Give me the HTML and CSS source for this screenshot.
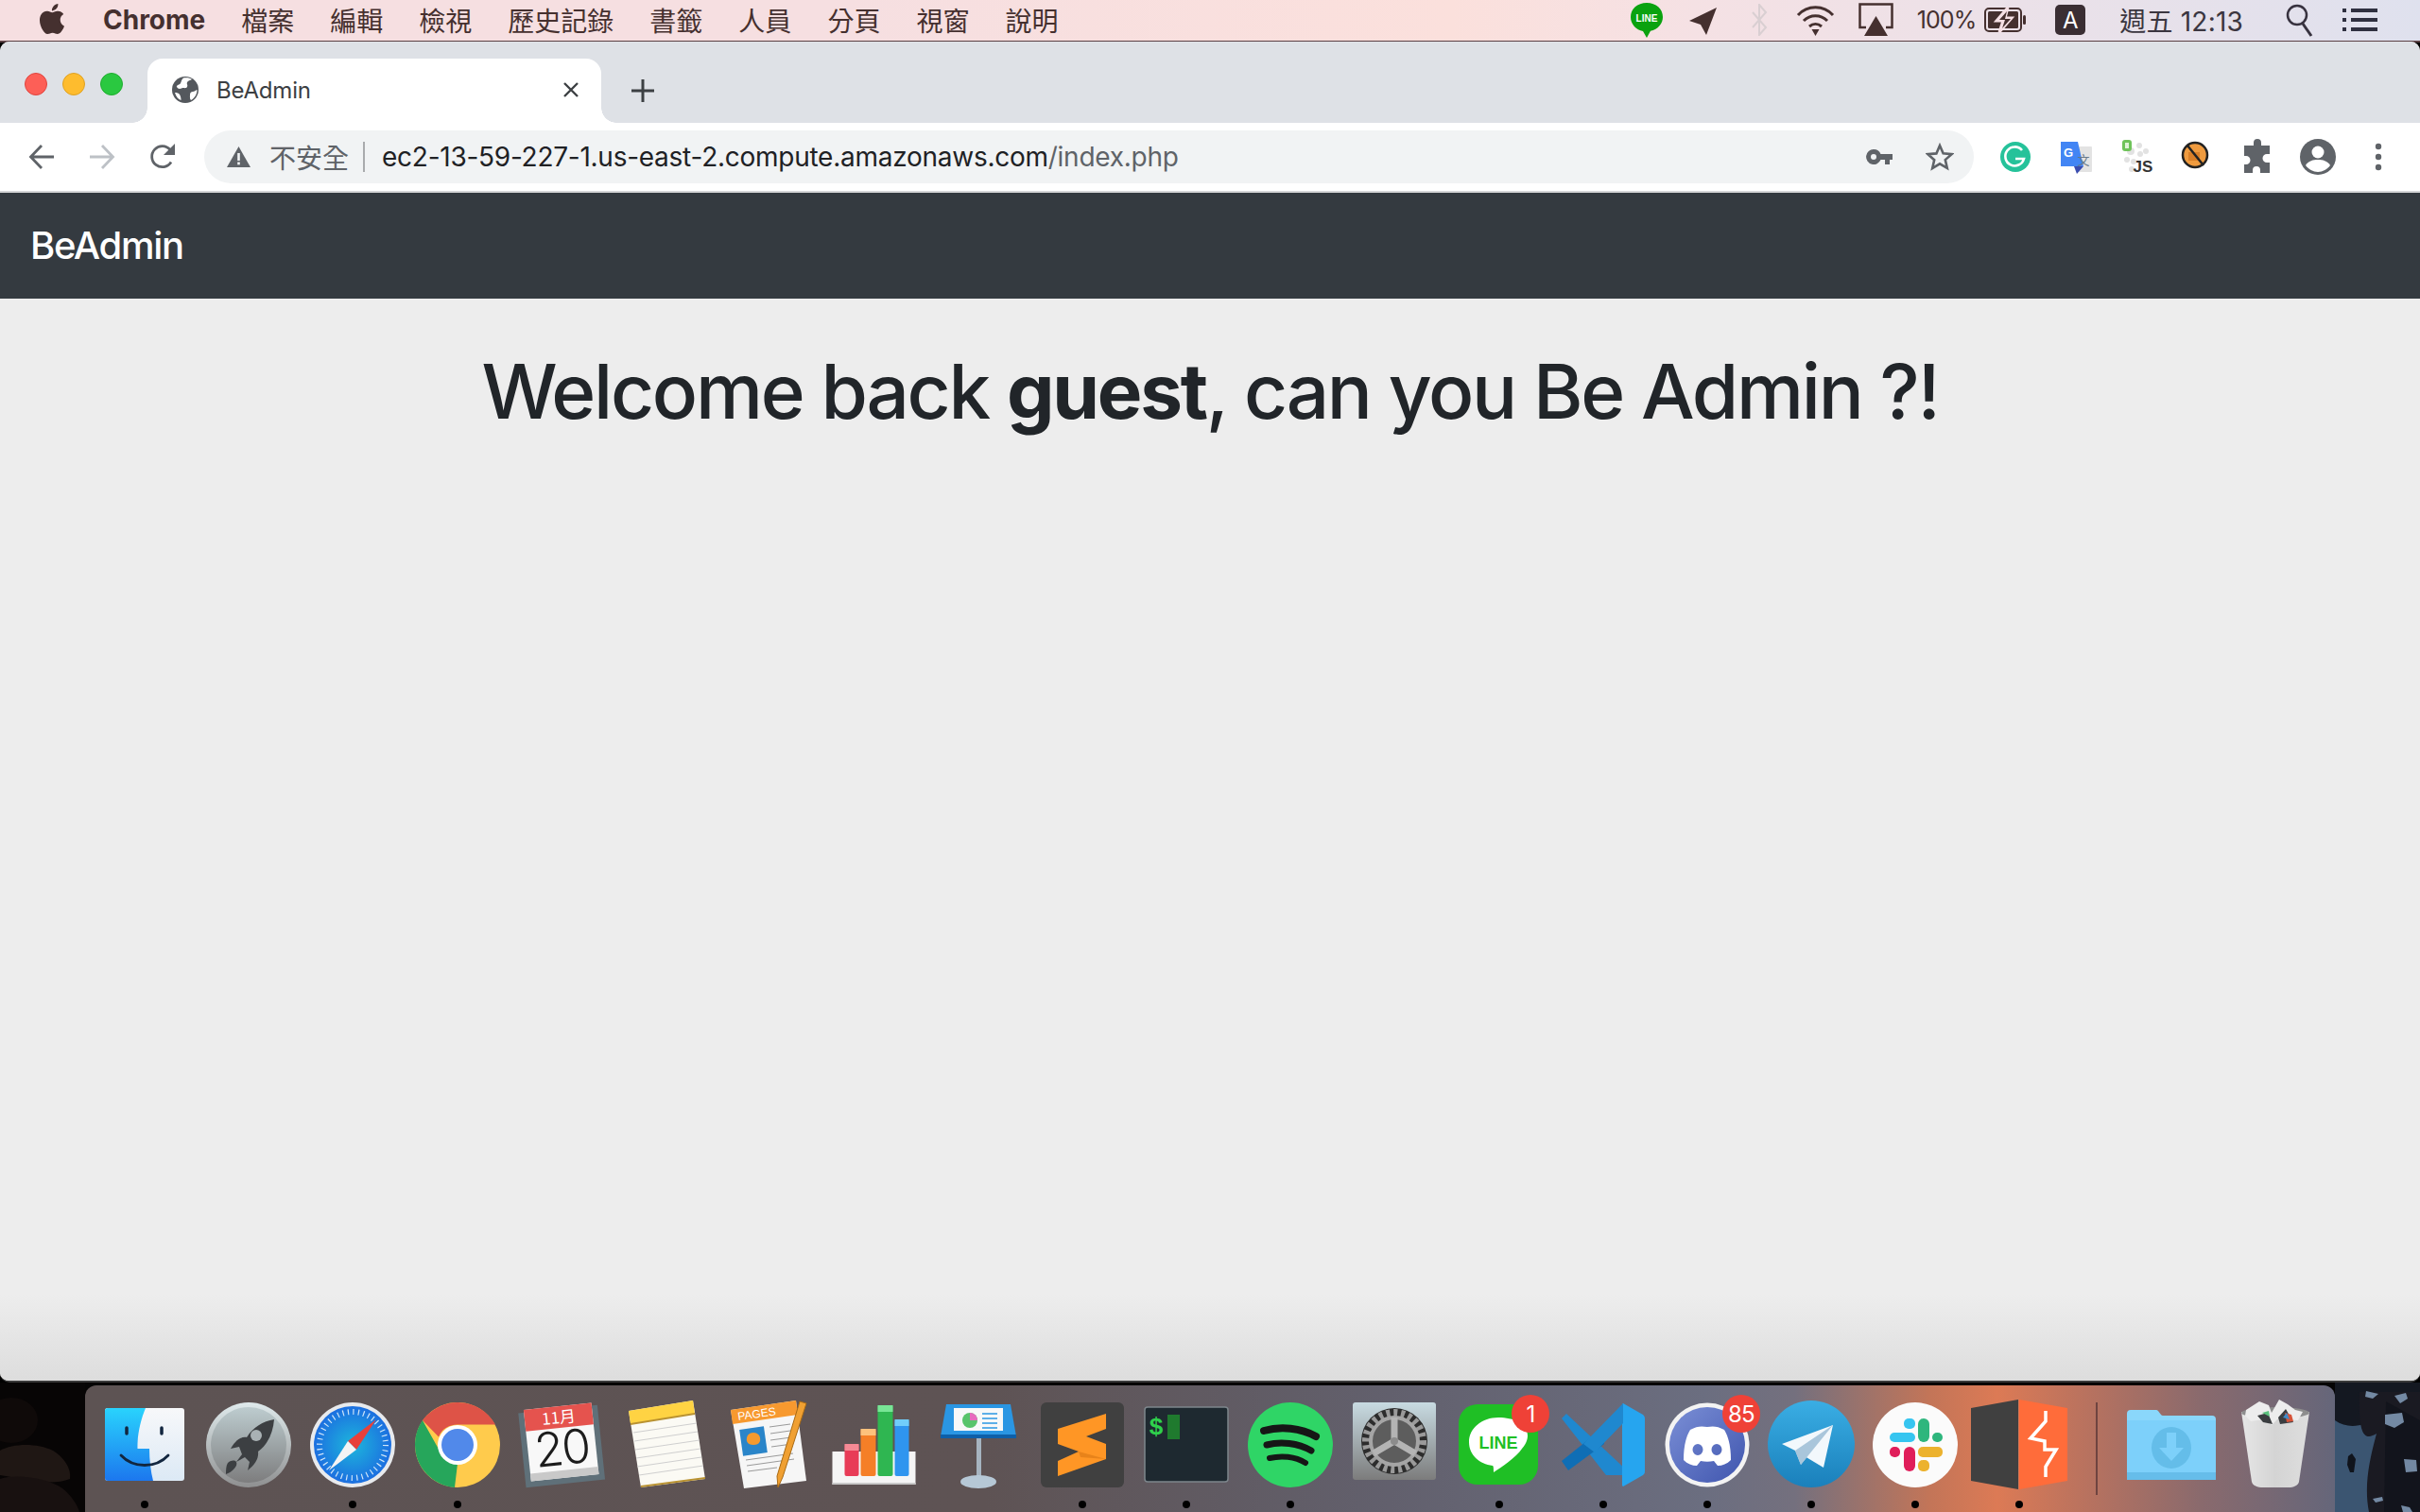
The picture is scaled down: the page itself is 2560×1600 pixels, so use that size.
FILE: index.html
```html
<!DOCTYPE html>
<html lang="zh-Hant">
<head>
<meta charset="utf-8">
<title>BeAdmin</title>
<link rel="stylesheet" href="styles.css">
</head>
<body>
<div class="screen">
  <header class="menubar">
    <svg class="apple" viewBox="0 0 24 24"><path fill="#45302f" d="M12.152 6.896c-.948 0-2.415-1.078-3.96-1.04-2.04.027-3.91 1.183-4.961 3.014-2.117 3.675-.546 9.103 1.519 12.09 1.013 1.454 2.208 3.09 3.792 3.039 1.52-.065 2.09-.987 3.935-.987 1.831 0 2.35.987 3.96.948 1.637-.026 2.676-1.48 3.676-2.948 1.156-1.688 1.636-3.325 1.662-3.415-.039-.013-3.182-1.221-3.22-4.857-.026-3.04 2.48-4.494 2.597-4.559-1.429-2.09-3.623-2.324-4.39-2.376-2-.156-3.675 1.09-4.61 1.09zM15.53 3.83c.843-1.012 1.4-2.427 1.245-3.83-1.207.052-2.662.805-3.532 1.818-.78.896-1.454 2.338-1.273 3.714 1.338.104 2.715-.688 3.559-1.701"/></svg>
    <nav class="menus">
      <span class="menu-app">Chrome</span>
      <span>檔案</span><span>編輯</span><span>檢視</span><span>歷史記錄</span><span>書籤</span><span>人員</span><span>分頁</span><span>視窗</span><span>說明</span>
    </nav>
    <div class="status">
      <svg class="st-line" viewBox="0 0 36 40"><path fill="#0aa20f" d="M18 2C8 2 1 8.500 1 17c0 8 6 13.500 13 15l4 7 4-7.200C30 30 35 24 35 17 35 8.500 28 2 18 2z"/><text x="18" y="22" class="st-line-text">LINE</text></svg>
      <svg class="st-send" viewBox="0 0 31 36"><path fill="#45302f" d="M30 5 1 19l12 4 6 11z"/></svg>
      <svg class="st-bt" viewBox="0 0 18 34"><path fill="none" stroke="#d9cfd2" stroke-width="2" d="M2 9l14 16-7 8V1l7 8L2 25"/></svg>
      <svg class="st-wifi" viewBox="0 0 41 34"><g fill="none" stroke="#45302f" stroke-width="3"><path d="M2 12C12 1 29 1 39 12"/><path d="M8 18c7-7 18-7 25 0"/><path d="M14 24c4-3.500 9-3.500 13 0"/></g><path fill="#45302f" d="M16.500 27h8L20.500 34z"/></svg>
      <svg class="st-air" viewBox="0 0 37 36"><path fill="none" stroke="#45302f" stroke-width="2.500" d="M8 26H1.500V1.500h34V26H29"/><path fill="#45302f" d="M18.500 14 31 35H6z"/></svg>
      <span class="st-pct">100%</span>
      <svg class="st-bat" viewBox="0 0 45 28"><rect x="1" y="2" width="38" height="24" rx="4" fill="none" stroke="#45302f" stroke-width="2"/><rect x="4" y="5" width="32" height="18" rx="1.500" fill="#45302f"/><path fill="#f6e0e5" stroke="#f6e0e5" stroke-width="3" d="M25 1 13 15h7l-4 12 13-15h-7z"/><path fill="#45302f" d="M24 5l-8 9h6l-3 9 9-10h-6z"/><rect x="41" y="9" width="3" height="10" rx="1.500" fill="#45302f"/></svg>
      <span class="st-input">A</span>
      <span class="st-time">週五 12:13</span>
      <svg class="st-search" viewBox="0 0 29 36"><circle cx="12" cy="13" r="10" fill="none" stroke="#37323f" stroke-width="2.500"/><path stroke="#37323f" stroke-width="3" d="M18 22l9 13"/></svg>
      <svg class="st-list" viewBox="0 0 37 24"><g fill="#2f3040"><rect y="0" width="4" height="4"/><rect y="10" width="4" height="4"/><rect y="20" width="4" height="4"/><rect x="9" y="0" width="28" height="4"/><rect x="9" y="10" width="28" height="4"/><rect x="9" y="20" width="28" height="4"/></g></svg>
    </div>
  </header>

  <main class="window">
    <div class="tabstrip">
      <div class="lights"><i class="light red"></i><i class="light yellow"></i><i class="light green"></i></div>
      <div class="tab">
        <svg class="favicon" viewBox="0 0 28 28"><circle cx="14" cy="14" r="14" fill="#54585d"/><path fill="#fff" d="M12 1.500c4-.5 7 0 9 1.500-2 1-4 1.500-5 3s1 3 0 5-4 .5-6 1.500-4 .5-5-1.500 3-2 4-4 1-4 3-5.500zM26.500 14c0 5-3 9-6.500 11-1.500-1.500-1-4-1-6s1.500-3 3-3 3-1.500 4.500-2zM3 17c2 0 4 .5 5 2s1.500 3.500 1.500 6C6.500 24 4 21 3 17z"/></svg>
        <span class="tab-title">BeAdmin</span>
        <svg class="tab-close" viewBox="0 0 16 16"><path stroke="#3c4043" stroke-width="2.400" d="M1 1l14 14M15 1 1 15"/></svg>
      </div>
      <svg class="newtab" viewBox="0 0 24 24"><path stroke="#3c4043" stroke-width="3" d="M12 0v24M0 12h24"/></svg>
    </div>

    <div class="toolbar">
      <svg class="navbtn" viewBox="0 0 28 28"><path fill="none" stroke="#5f6368" stroke-width="2.800" d="M27 14H3M14 2 2.500 14 14 26"/></svg>
      <svg class="navbtn" viewBox="0 0 28 28"><path fill="none" stroke="#bdc1c6" stroke-width="2.800" d="M1 14h24M14 2l11.500 12L14 26"/></svg>
      <svg class="navbtn" viewBox="0 0 28 28"><path fill="none" stroke="#5f6368" stroke-width="2.800" d="M23 19.500A11 11 0 1 1 22 6.500"/><path fill="#5f6368" d="M27 0v12H15z"/></svg>
      <div class="omnibox">
        <svg class="warn" viewBox="0 0 25 22"><path fill="#5f6368" d="M12.500 0 25 22H0z"/><rect x="11.200" y="7" width="2.600" height="8" fill="#f1f3f4"/><rect x="11.200" y="16.500" width="2.600" height="2.800" fill="#f1f3f4"/></svg>
        <span class="insecure">不安全</span>
        <i class="omni-sep"></i>
        <span class="url">ec2-13-59-227-1.us-east-2.compute.amazonaws.com<span class="url-path">/index.php</span></span>
        <svg class="key" viewBox="0 0 28 18"><path fill="#5f6368" fill-rule="evenodd" d="M8 1a8 8 0 0 1 7.500 5H28v6h-3v5h-5v-5h-4.500A8 8 0 1 1 8 1zm0 5a3 3 0 1 0 0 6 3 3 0 0 0 0-6z"/></svg>
        <svg class="star" viewBox="0 0 30 30"><path fill="none" stroke="#5f6368" stroke-width="2.600" d="M15 3l3.600 8.300 9 .8-6.800 6 2 8.800L15 22.300 7.200 27l2-8.800-6.800-6 9-.8z"/></svg>
      </div>
      <div class="exts">
        <svg class="ext" viewBox="0 0 40 40"><circle cx="20" cy="20" r="16" fill="#25c29a"/><path fill="none" stroke="#fff" stroke-width="2.600" d="M27 13a10 10 0 1 0 2 9h-9"/></svg>
        <svg class="ext" viewBox="0 0 40 40"><rect x="20" y="9" width="17" height="27" rx="1" fill="#e3e3e3"/><path fill="#4285f4" d="M4 4h18l6 26H4z"/><path fill="#3a4cb0" d="M18 30h10l-7 8z"/><text x="12" y="20" class="ext-g">G</text><text x="28" y="28" class="ext-wen">文</text></svg>
        <svg class="ext" viewBox="0 0 40 40"><g fill="#e2e2e2"><circle cx="14" cy="14" r="4"/><circle cx="23" cy="8" r="3"/><circle cx="30" cy="14" r="3"/><circle cx="24" cy="17" r="3"/><circle cx="10" cy="23" r="3"/><circle cx="17" cy="25" r="3"/><circle cx="15" cy="33" r="3"/></g><rect x="5" y="2" width="10" height="12" rx="3" fill="#6fc35a"/><rect x="8" y="5" width="4" height="6" fill="#dff2d8"/><text x="27" y="36" class="ext-js">JS</text></svg>
        <svg class="ext" viewBox="0 0 40 40"><circle cx="18" cy="18" r="13" fill="#ef9b3f" stroke="#222" stroke-width="2.500"/><rect x="11" y="15" width="12" height="9" fill="#d97f28"/><path stroke="#222" stroke-width="2.500" d="M10 8l17 21"/></svg>
        <svg class="ext" viewBox="0 0 40 40"><path fill="#5f6368" d="M16 4a4 4 0 0 1 8 0v3h9v9h-3a4 4 0 0 0 0 9h3v11H23v-3a4 4 0 0 0-8 0v3H6V27h2a4 4 0 0 0 0-9H6V7h10z" transform="translate(0 1)"/></svg>
        <svg class="ext" viewBox="0 0 40 40"><circle cx="20" cy="20" r="19" fill="#5f6368"/><circle cx="20" cy="15" r="6.500" fill="#fff"/><path fill="#fff" d="M7 29c3-5 8-6 13-6s10 1 13 6c-3 4-8 7-13 7S10 33 7 29z"/></svg>
        <svg class="ext" viewBox="0 0 40 40"><g fill="#5f6368"><circle cx="20" cy="9" r="3.200"/><circle cx="20" cy="20" r="3.200"/><circle cx="20" cy="31" r="3.200"/></g></svg>
      </div>
    </div>

    <div class="navbar"><span class="brand">BeAdmin</span></div>
    <div class="content">
      <h1 class="welcome">Welcome back <strong>guest</strong>, can you Be Admin ?!</h1>
    </div>
  </main>

  <footer class="desktop">
    <svg class="wall" viewBox="0 0 90 137" preserveAspectRatio="none"><rect width="90" height="137" fill="#070505"/><ellipse cx="12" cy="40" rx="28" ry="24" fill="#0f0a09"/><path fill="#1f1714" d="M0 72c14-8 40-8 56 0 10 6 20 18 18 30-20 8-50 0-74-4z"/><path fill="#181110" d="M0 102c20-6 52 0 66 10 10 8 16 18 18 25H0z"/></svg>
    <div class="dock">
      <div class="slot">
        <svg class="app" viewBox="0 0 90 90"><defs><linearGradient id="fb" x1="0" y1="0" x2="0" y2="1"><stop offset="0" stop-color="#29d3fd"/><stop offset="1" stop-color="#1c77ee"/></linearGradient><linearGradient id="fw" x1="0" y1="0" x2="0" y2="1"><stop offset="0" stop-color="#f7f8fa"/><stop offset="1" stop-color="#dce9f5"/></linearGradient></defs><rect x="3" y="6" width="84" height="77" rx="3" fill="url(#fw)"/><path fill="url(#fb)" d="M6 6h40c-5 12-9 28-8.500 43H50c0 12 1.500 24 4 34H6a3 3 0 0 1-3-3V9a3 3 0 0 1 3-3z"/><path stroke="#12263f" stroke-width="3.500" stroke-linecap="round" d="M26 27v6M63 27v6"/><path fill="none" stroke="#12263f" stroke-width="2.800" stroke-linecap="round" d="M20 56c13 14 37 14 50 0"/></svg>
        <i class="dot"></i>
      </div>
      <div class="slot">
        <svg class="app" viewBox="0 0 90 90"><defs><linearGradient id="lp" x1="0" y1="0" x2="0" y2="1"><stop offset="0" stop-color="#dfeaec"/><stop offset="1" stop-color="#8f9091"/></linearGradient><linearGradient id="lpi" x1="0" y1="0" x2="0" y2="1"><stop offset="0" stop-color="#bdcccf"/><stop offset="1" stop-color="#7d7d7e"/></linearGradient></defs><circle cx="45" cy="45" r="45" fill="url(#lp)"/><circle cx="45" cy="45" r="40" fill="url(#lpi)"/><path fill="#3c3f42" d="M72 18c-12 2-22 8-29 19-6-1-12 3-17 12l9-2 3 8-6 8 9-5 5 5-2 9c8-6 12-13 11-20 10-7 16-20 17-34z"/><path fill="#3c3f42" d="M23 64c4-3 7-3 9-1 1 2 0 5-3 8-2 2-5 4-8 5 0-4 0-9 2-12z"/><circle cx="53" cy="35" r="6" fill="#a9b1b4"/></svg>
        <i class="dot off"></i>
      </div>
      <div class="slot">
        <svg class="app" viewBox="0 0 90 90"><defs><radialGradient id="sf" cx=".5" cy=".5" r=".5"><stop offset="0" stop-color="#1db6dc"/><stop offset="1" stop-color="#1c6fe0"/></radialGradient></defs><circle cx="45" cy="45" r="45" fill="#e8eaed"/><circle cx="45" cy="45" r="41" fill="url(#sf)"/><circle cx="45" cy="45" r="35" fill="none" stroke="#cfe6fa" stroke-width="6" stroke-dasharray="1.200 4.300"/><path fill="#e8403a" d="M70 18 40 41l9 9z"/><path fill="#f4f4f4" d="M20 72l20-31 9 9z"/></svg>
        <i class="dot"></i>
      </div>
      <div class="slot">
        <svg class="app" viewBox="0 0 90 90"><circle cx="45" cy="45" r="45" fill="#ffcb4c"/><path fill="#de5347" d="M45 0c17 0 32 9 40 23.500H45c-9 0-17 5-20 13L8 19C16 8 30 0 45 0z"/><path fill="#26a65b" d="M8 19l19 34c3 7 10 12 18 12l-3 25C19 88 0 69 0 45c0-10 3-19 8-26z"/><circle cx="45" cy="45" r="21" fill="#fff"/><circle cx="45" cy="45" r="17" fill="#5189ea"/></svg>
        <i class="dot"></i>
      </div>
      <div class="slot">
        <svg class="app" viewBox="0 0 90 90"><g transform="rotate(-6 45 45)"><rect x="3" y="7" width="84" height="79" fill="#5f7079"/><rect x="9" y="4" width="72" height="76" fill="#f8f8f8"/><rect x="9" y="4" width="72" height="23" fill="#e5534e"/><rect x="9" y="72" width="72" height="8" fill="#c9c9c9"/><text x="45" y="22" class="cal-month">11月</text><text x="45" y="66" class="cal-day">20</text></g></svg>
        <i class="dot off"></i>
      </div>
      <div class="slot">
        <svg class="app" viewBox="1 0 90 90"><path fill="#fbfaf4" d="M7 9 75-2l13 83-68 9z"/><path fill="#ffd343" d="M7 9 75-2l2 14L9 23z"/><path fill="#b99231" d="M9 22l68-11v2L9 24z"/><g stroke="#cfcfcf" stroke-width="1"><path d="M12 32 79 22M13 41 80 31M14 50 82 40M15 59 83 49M16 68 84 58M18 77 86 67"/></g><path fill="#b99231" d="M20 88l68-9v2l-68 9z"/></svg>
        <i class="dot off"></i>
      </div>
      <div class="slot">
        <svg class="app" viewBox="1 0 90 90"><path fill="#f6f6f6" d="M5 8 74-2l11 85-66 8z"/><path fill="#f7992f" d="M5 8 74-2l2 15L7 23z"/><text x="13" y="19" class="pages-label" transform="rotate(-8 13 19)">PAGES</text><rect x="16" y="27" width="26" height="28" fill="#2a85c9" transform="rotate(-8 29 41)"/><path fill="#f59a2e" d="M29 32c5 0 8 4 7 9-1 3-4 4-7 4s-6-1-7-4c-1-5 2-9 7-9z"/><g stroke="#9a9a9a" stroke-width="1"><path d="M46 26 68 23M47 33 68 30M47 40 69 37M48 47 70 44M21 61 71 54M22 67 72 60M23 73 54 69"/></g><path fill="#f0a032" stroke="#a86a14" stroke-width="1" d="M78-1l7 2L60 79l-5 11-1-12z"/></svg>
        <i class="dot off"></i>
      </div>
      <div class="slot">
        <svg class="app" viewBox="1.500 0 90 90"><path fill="#f5f5f5" d="M3 52h88v35H3z"/><rect x="3" y="85" width="88" height="2" fill="#c9c9c9"/><rect x="16" y="44" width="15" height="34" rx="2" fill="#e83b57"/><rect x="33" y="28" width="16" height="50" rx="2" fill="#f57f27"/><rect x="51" y="3" width="16" height="75" rx="2" fill="#2fb651"/><rect x="69" y="18" width="15" height="60" rx="2" fill="#2f95ef"/><g><rect x="16" y="44" width="15" height="7" fill="#f58a95"/><rect x="33" y="28" width="16" height="7" fill="#fdc27c"/><rect x="51" y="3" width="16" height="7" fill="#78e596"/><rect x="69" y="18" width="15" height="7" fill="#71cdfa"/></g></svg>
        <i class="dot off"></i>
      </div>
      <div class="slot">
        <svg class="app" viewBox="2 0 90 90"><rect x="45" y="38" width="5" height="46" fill="#a6b4c0"/><ellipse cx="47" cy="84" rx="19" ry="7" fill="#b6c8d6"/><path fill="#2a96e3" d="M13 2h68l6 34H7z"/><rect x="7" y="34" width="80" height="4" fill="#0e5fa8"/><rect x="21" y="6" width="52" height="24" fill="#f8f8f8"/><circle cx="38" cy="19" r="8" fill="#58c46a"/><path fill="#e86abf" d="M38 19v-8a8 8 0 0 1 8 8z"/><g stroke="#5dafe8" stroke-width="2"><path d="M51 12h16M51 17h16M51 22h16M51 27h16"/></g></svg>
        <i class="dot off"></i>
      </div>
      <div class="slot">
        <svg class="app" viewBox="0 0 90 90"><rect x="1" y="0" width="88" height="90" rx="6" fill="#404040"/><path fill="#ff9625" d="M70 12 19 28v16l22 8-22 10v16l51-18V44l-21-8 21-8z"/><path fill="#e8831a" d="M41 52l29 8-27-2z"/></svg>
        <i class="dot"></i>
      </div>
      <div class="slot">
        <svg class="app" viewBox="0 0 90 90"><rect x="1" y="5" width="88" height="79" rx="3" fill="#1e2930" stroke="#7d868c" stroke-width="1.500"/><text x="13" y="34" class="term-dollar">$</text><rect x="25" y="13" width="13" height="26" fill="#1f7a2e"/></svg>
        <i class="dot"></i>
      </div>
      <div class="slot">
        <svg class="app" viewBox="0 0 90 90"><circle cx="45" cy="45" r="45" fill="#2fd566"/><g fill="none" stroke="#161616" stroke-linecap="round"><path stroke-width="8" d="M17 30c18-5 39-3 55 6"/><path stroke-width="7" d="M20 45c15-4 33-2 47 6"/><path stroke-width="6" d="M23 59c12-3 27-2 38 5"/></g></svg>
        <i class="dot"></i>
      </div>
      <div class="slot">
        <svg class="app" viewBox="0 0 90 90"><defs><linearGradient id="sp" x1="0" y1="0" x2="0" y2="1"><stop offset="0" stop-color="#c8dbe2"/><stop offset="1" stop-color="#7c7c7c"/></linearGradient></defs><rect x="1" y="0" width="88" height="82" rx="3" fill="url(#sp)"/><circle cx="45" cy="41" r="35" fill="#2c2c2c"/><circle cx="45" cy="41" r="30" fill="none" stroke="#9a9a9a" stroke-width="8" stroke-dasharray="4 3.800"/><circle cx="45" cy="41" r="25" fill="#5d5d5d" stroke="#a5a5a5" stroke-width="4"/><g stroke="#b4b4b4" stroke-width="7"><path d="M45 41V16M45 41 23 54M45 41 67 54"/></g><circle cx="45" cy="41" r="4" fill="#8c8c8c"/></svg>
        <i class="dot off"></i>
      </div>
      <div class="slot">
        <svg class="app" viewBox="0 0 90 90"><rect x="2" y="2" width="84" height="85" rx="20" fill="#1fbf25"/><path fill="#fff" d="M44 16c-17 0-31 11-31 26 0 14 11 23 25 25 1 0 1 4 1 7 8-5 24-16 30-25 4-5 6-9 6-14C75 22 60 16 44 16z"/><text x="44" y="49" class="line-text">LINE</text></svg>
        <i class="dot"></i><b class="badge badge-line">1</b>
      </div>
      <div class="slot">
        <svg class="app" viewBox="0 0 90 90"><path fill="#1f88cf" d="M1 17 6 12 70 72l-5 5-17 0z"/><path fill="#0f6eb5" d="M1 62 46 26l0 18L8 72z"/><path fill="#26a5ef" d="M66 1l21 12c1 1 2 2 2 4v56c0 2-1 3-2 4L66 89l-1-1V2z"/><path fill="#1f88cf" d="M66 1 24 44l12 9 30-31z"/></svg>
        <i class="dot"></i>
      </div>
      <div class="slot">
        <svg class="app" viewBox="3 0 90 90"><defs><linearGradient id="dc" x1="0" y1="0" x2="1" y2="1"><stop offset="0" stop-color="#7b8fd6"/><stop offset="1" stop-color="#3f55ae"/></linearGradient></defs><circle cx="48" cy="45" r="44.500" fill="#f3f3f3"/><circle cx="48" cy="45" r="40" fill="url(#dc)"/><path fill="#fff" fill-rule="evenodd" d="M30 29c7-4 12-4 18-3 6-1 11-1 18 3 5 8 7 19 7 32-4 4-9 6-14 6l-4-5c-5 1-9 1-14 0l-4 5c-5 0-10-2-14-6 0-13 2-24 7-32zm8 15a5.500 6 0 1 0 0 12 5.500 6 0 0 0 0-12zm20 0a5.500 6 0 1 0 0 12 5.500 6 0 0 0 0-12z"/></svg>
        <i class="dot"></i><b class="badge badge-discord">85</b>
      </div>
      <div class="slot">
        <svg class="app" viewBox="0 0 90 90"><defs><linearGradient id="tg" x1="0" y1="0" x2="0" y2="1"><stop offset="0" stop-color="#3aaee4"/><stop offset="1" stop-color="#1a80bb"/></linearGradient></defs><circle cx="45" cy="44" r="46" fill="url(#tg)"/><path fill="#c8dbe9" d="M28 51l6 15 8-10 26-32z"/><path fill="#f2f8fc" d="M68 24 14 44l14 7 30 18z"/><path fill="#a9c6db" d="M28 51l40-27-26 32-8 10z"/></svg>
        <i class="dot"></i>
      </div>
      <div class="slot">
        <svg class="app" viewBox="0 0 90 90"><circle cx="45" cy="45" r="45" fill="#fbfbfb"/><rect x="33" y="17" width="12" height="11" rx="5" fill="#36c5f0"/><rect x="18" y="32" width="27" height="10" rx="5" fill="#36c5f0"/><rect x="48" y="17" width="12" height="25" rx="6" fill="#2eb67d"/><rect x="63" y="32" width="11" height="10" rx="5" fill="#2eb67d"/><rect x="48" y="47" width="26" height="11" rx="5" fill="#ecb22e"/><rect x="48" y="61" width="12" height="12" rx="5" fill="#ecb22e"/><rect x="33" y="47" width="12" height="26" rx="6" fill="#e01e5a"/><rect x="18" y="47" width="11" height="11" rx="5" fill="#e01e5a"/></svg>
        <i class="dot"></i>
      </div>
      <div class="slot">
        <svg class="app" viewBox="0 0 90 90"><path fill="#404040" d="M-6 6 44-3v95L-6 83z"/><path fill="#ff6c3a" d="M45-3 96 6v77L45 92z"/><path fill="none" stroke="#fff" stroke-width="3.500" d="M73 9v11L57 38l15 3v9h12L73 68v11"/></svg>
        <i class="dot"></i>
      </div>
      <i class="dock-sep"></i>
      <div class="slot slot-end">
        <svg class="app" viewBox="0 0 90 90"><path fill="#8ad7fb" d="M-2 12a4 4 0 0 1 4-4h27c3 0 4 6 7 6h52a4 4 0 0 1 4 4v20H-2z"/><path fill="#7dd0fa" d="M-2 19h94v63H-2z"/><rect x="-2" y="74" width="94" height="8" fill="#66bdea"/><ellipse cx="45" cy="48" rx="21" ry="22" fill="#64bde9"/><path fill="#7dd0fa" d="M40 32h10v16h8L45 62 32 48h8z"/></svg>
        <i class="dot off"></i>
      </div>
      <div class="slot slot-end">
        <svg class="app" viewBox="0 0 90 90"><defs><linearGradient id="tr" x1="0" y1="0" x2="1" y2="0"><stop offset="0" stop-color="#e6e6e6"/><stop offset=".5" stop-color="#d4d4d4"/><stop offset="1" stop-color="#dedede"/></linearGradient></defs><path fill="url(#tr)" d="M9 10h72l-11 74c-1 4-6 6-11 6H32c-6 0-11-2-12-6z"/><ellipse cx="45" cy="11" rx="36" ry="6" fill="#8d8d8d"/><path fill="#ededed" d="M14 8 28-1l10 4 3 8 8-14 9 5 8 6 8 2-5 9-22-1-6 6-8-6-14 2-6-6z"/><path fill="#3a3d40" d="M26 14l11-3 5 12-10-2zM48 16l8-9 8 14-14 2z"/><path fill="#d6543a" d="M55 11l7 2 2 7-7 1z"/><path fill="#3f8bc9" d="M53 16l4-5 3 7z"/><path fill="#5ac27d" d="M31 11l7-2 1 6z"/></svg>
        <i class="dot off"></i>
      </div>
    </div>
    <svg class="wall" viewBox="0 0 90 137" preserveAspectRatio="none"><rect width="90" height="137" fill="#141821"/><path fill="#3b5571" d="M0 40c14 10 30 6 46-2l-6 99H0z"/><path fill="#1a1a22" d="M26 10h64v127H36c-6-30 2-60 8-83-10 6-20 8-18-44z"/><path fill="#12141c" d="M54 20 90 40v97H52z"/><g fill="#7389a3"><path d="M53 34l18-2 2 10-10 6-10-4z"/><path d="M73 81l13 1 1 12-12 1z"/><path d="M33 9l13 3-6 5-8-2z"/><path d="M63 14l12-3 2 6-8 5z"/><path d="M40 123l10-2 1 4-8 2z"/><path d="M70 130l9 2 3 5H72z"/></g><path fill="#10141c" d="M14 78l4-3 4 6-2 14h-4l-3-8z"/></svg>
  </footer>
</div>
</body>
</html>
```
FILE: styles.css
```css
* { box-sizing: border-box; }
html, body { margin: 0; padding: 0; }
body { width: 2560px; height: 1600px; overflow: hidden; background: #000; font-family: Inter, "Noto Sans CJK TC", sans-serif; }
.screen { width: 2560px; height: 1600px; display: flex; flex-direction: column; }

/* macOS menu bar */
.menubar { height: 45px; flex: none; display: flex; align-items: center; padding: 0 45px 1px 39px; color: #45302f; font-size: 28px; border-bottom: 2px solid #5b4044; background: linear-gradient(90deg, #f6dfe1 0%, #f6dfe1 35%, #fbe0dc 60%, #f5e1e4 70%, #dfe1ee 100%); }
.apple { width: 32px; height: 32px; flex: none; margin-top: -2px; }
.menus { display: flex; align-items: center; gap: 38px; margin-left: 38px; font-family: "Noto Sans CJK TC", sans-serif; }
.menu-app { font-family: Inter, sans-serif; font-weight: 700; font-size: 28px; }
.status { margin-left: auto; display: flex; align-items: center; }
.st-line { width: 36px; height: 40px; }
.st-line-text { font: 700 10px "Liberation Sans", sans-serif; fill: #fff; text-anchor: middle; }
.st-send { width: 31px; height: 36px; margin-left: 26px; }
.st-bt { width: 18px; height: 34px; margin-left: 35px; }
.st-wifi { width: 41px; height: 34px; margin-left: 30px; }
.st-air { width: 37px; height: 36px; margin-left: 25px; }
.st-pct { margin-left: 25px; font-size: 25px; letter-spacing: -0.9px; }
.st-bat { width: 45px; height: 28px; margin-left: 9px; }
.st-input { width: 32px; height: 32px; margin-left: 30px; border-radius: 5px; background: #3a2e33; color: #fff; font-size: 24px; display: flex; align-items: center; justify-content: center; }
.st-time { margin-left: 36px; font-size: 28px; letter-spacing: 0.2px; color: #3b3640; font-family: Inter, "Noto Sans CJK TC", sans-serif; }
.st-search { width: 29px; height: 36px; margin-left: 45px; }
.st-list { width: 37px; height: 24px; margin-left: 31px; }

/* Browser window */
.window { flex: 1; display: flex; flex-direction: column; min-height: 0; border-radius: 10px; background: #ededed; overflow: hidden; margin-top: -1px; border-bottom: 2px solid #3a3a3a; }
.tabstrip { height: 86px; flex: none; display: flex; align-items: flex-end; background: #dee1e6; }
.lights { align-self: flex-start; display: flex; gap: 16px; margin: 33px 26px 0 26px; }
.light { width: 24px; height: 24px; border-radius: 50%; display: block; }
.red { background: #fd5f57; border: 1px solid #e0443e; }
.yellow { background: #febc2e; border: 1px solid #dea123; }
.green { background: #2ac840; border: 1px solid #1fae2f; }
.tab { position: relative; width: 480px; height: 68px; display: flex; align-items: center; background: #fff; border-radius: 16px 16px 0 0; padding: 0 24px 2px 26px; }
.tab::before, .tab::after { content: ""; position: absolute; bottom: 0; width: 16px; height: 16px; }
.tab::before { left: -16px; background: radial-gradient(circle at 0 0, transparent 15.500px, #fff 16px); }
.tab::after { right: -16px; background: radial-gradient(circle at 100% 0, transparent 15.500px, #fff 16px); }
.favicon { width: 28px; height: 28px; flex: none; }
.tab-title { margin-left: 19px; font-size: 24px; color: #3c4043; letter-spacing: -0.2px; }
.tab-close { width: 16px; height: 16px; margin-left: auto; }
.newtab { width: 24px; height: 24px; flex: none; margin: 0 0 22px 32px; }

.toolbar { height: 74px; flex: none; display: flex; align-items: center; gap: 36px; padding: 0 0 1px 30px; background: #fff; border-bottom: 2px solid #d5d6d8; }
.navbtn { width: 28px; height: 28px; flex: none; }
.omnibox { width: 1872px; height: 56px; flex: none; margin-left: -6px; display: flex; align-items: center; padding: 0 21px 0 24px; background: #f1f3f4; border-radius: 28px; }
.warn { width: 25px; height: 22px; flex: none; }
.insecure { margin-left: 20px; font-size: 28px; color: #5f6368; font-family: "Noto Sans CJK TC", sans-serif; }
.omni-sep { width: 2px; height: 32px; margin: 0 18px 0 15px; background: #a9abad; }
.url { font-size: 28px; color: #202124; font-family: Inter, sans-serif; white-space: nowrap; letter-spacing: -0.26px; }
.url-path { color: #5f6368; }
.key { width: 28px; height: 18px; flex: none; margin-left: auto; }
.star { width: 30px; height: 30px; flex: none; margin-left: 35px; }
.exts { display: flex; gap: 24px; margin-left: -12px; }
.ext { width: 40px; height: 40px; flex: none; }
.ext-g { font: 700 13px "Liberation Sans", sans-serif; fill: #fff; text-anchor: middle; }
.ext-wen { font: 13px "Noto Sans CJK TC", sans-serif; fill: #6a7a88; text-anchor: middle; }
.ext-js { font: 700 17px "Liberation Sans", sans-serif; fill: #333; text-anchor: middle; }

/* Page content */
.navbar { height: 112px; flex: none; display: flex; align-items: center; padding: 0 0 2px 32px; background: #343a40; }
.brand { font-size: 40px; font-weight: 450; color: #fff; letter-spacing: -1.3px; }
.content { flex: 1; background: linear-gradient(180deg, #ededed 0, #ededed 92%, #dddddd 100%); text-align: center; padding-top: 50px; }
.welcome { margin: 0; font-size: 80px; line-height: 96px; font-weight: 450; color: #212529; letter-spacing: -2.27px; }
.welcome strong { font-weight: 700; }

/* Desktop & dock */
.desktop { height: 137px; flex: none; display: flex; background: #050404; }
.wall { width: 90px; height: 137px; flex: none; }
.dock { flex: 1; height: 134px; margin-top: 3px; display: flex; padding-left: 8px; border-radius: 12px 12px 0 0; background: linear-gradient(90deg, #5d5353 0, #5e5354 40%, #62606d 58%, #6b6e80 72%, #74707e 76%, #c37558 82%, #dc7a55 85%, #b8725f 89%, #8a6a6d 94%, #65667a 100%); }
.slot { position: relative; width: 110.200px; flex: none; display: flex; flex-direction: column; align-items: center; padding-top: 18px; }
.slot-end { width: 110px; }
.app { width: 90px; height: 90px; overflow: visible; flex: none; }
.dot { width: 8px; height: 8px; margin-top: 14px; border-radius: 50%; background: #000; }
.dot.off { visibility: hidden; }
.dock-sep { width: 2px; height: 98px; margin: 18px 23px 0 25px; background: #6f4440; flex: none; }
.badge { position: absolute; top: 10px; width: 40px; height: 40px; border-radius: 50%; background: #ef4137; color: #fff; font-size: 24px; font-weight: 400; display: flex; align-items: center; justify-content: center; }
.badge-line { left: 69px; }
.badge-discord { left: 71px; letter-spacing: -1px; }
.cal-month { font: 17px "Noto Sans CJK TC", sans-serif; fill: #fff; text-anchor: middle; }
.cal-day { font: 300 50px Inter, sans-serif; fill: #1c1c1c; text-anchor: middle; letter-spacing: -2px; }
.pages-label { font: 12px "Liberation Sans", sans-serif; fill: #fff; }
.term-dollar { font: 700 26px "Liberation Mono", monospace; fill: #2fd04c; text-anchor: middle; }
.line-text { font: 800 18px "Liberation Sans", sans-serif; fill: #1fbf25; text-anchor: middle; }
```
